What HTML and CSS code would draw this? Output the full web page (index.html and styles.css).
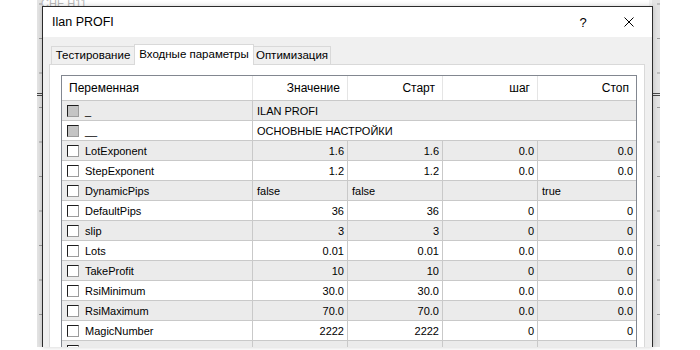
FILE: index.html
```html
<!DOCTYPE html>
<html>
	<head>
		<meta http-equiv="Content-Type" content="text/html; charset=utf-8" />
		<title>Ilan PROFI</title>
		<link rel="stylesheet" href="styles.css">
	</head>
	<body>
		<!-- окно терминала за диалогом -->
		<div class="backdrop">
			<div class="scale scale-left"></div>
			<div class="chart">
				<span class="chart-caption">СНЕ Н11</span>
			</div>
			<div class="scale scale-right"></div>
		</div>

		<div class="dialog">
			<div class="titlebar">
				<span class="title">Ilan PROFI</span>
				<span class="caption-btn">?</span>
				<span class="caption-btn">
					<svg width="10" height="10" viewBox="0 0 10 10"><path d="M0.5 0.5L9.5 9.5M9.5 0.5L0.5 9.5" stroke="#000" stroke-width="1" fill="none"/></svg>
				</span>
			</div>
			<div class="dialog-body">
				<div class="tabs">
					<div class="tab tab-test">Тестирование</div>
					<div class="tab tab-active">Входные параметры</div>
					<div class="tab tab-opt">Оптимизация</div>
				</div>
				<div class="page">
					<div class="grid">
						<div class="row head">
							<div class="cell">Переменная</div>
							<div class="cell num">Значение</div>
							<div class="cell num">Старт</div>
							<div class="cell num">шаг</div>
							<div class="cell num">Стоп</div>
						</div>
						<div class="row">
							<div class="cell name"><i class="chk chk-off"></i>_</div>
							<div class="cell span">ILAN PROFI</div>
						</div>
						<div class="row">
							<div class="cell name"><i class="chk chk-off"></i>__</div>
							<div class="cell span">ОСНОВНЫЕ НАСТРОЙКИ</div>
						</div>
						<div class="row">
							<div class="cell name"><i class="chk"></i>LotExponent</div>
							<div class="cell num">1.6</div>
							<div class="cell num">1.6</div>
							<div class="cell num">0.0</div>
							<div class="cell num">0.0</div>
						</div>
						<div class="row">
							<div class="cell name"><i class="chk"></i>StepExponent</div>
							<div class="cell num">1.2</div>
							<div class="cell num">1.2</div>
							<div class="cell num">0.0</div>
							<div class="cell num">0.0</div>
						</div>
						<div class="row">
							<div class="cell name"><i class="chk"></i>DynamicPips</div>
							<div class="cell">false</div>
							<div class="cell">false</div>
							<div class="cell"></div>
							<div class="cell">true</div>
						</div>
						<div class="row">
							<div class="cell name"><i class="chk"></i>DefaultPips</div>
							<div class="cell num">36</div>
							<div class="cell num">36</div>
							<div class="cell num">0</div>
							<div class="cell num">0</div>
						</div>
						<div class="row">
							<div class="cell name"><i class="chk"></i>slip</div>
							<div class="cell num">3</div>
							<div class="cell num">3</div>
							<div class="cell num">0</div>
							<div class="cell num">0</div>
						</div>
						<div class="row">
							<div class="cell name"><i class="chk"></i>Lots</div>
							<div class="cell num">0.01</div>
							<div class="cell num">0.01</div>
							<div class="cell num">0.0</div>
							<div class="cell num">0.0</div>
						</div>
						<div class="row">
							<div class="cell name"><i class="chk"></i>TakeProfit</div>
							<div class="cell num">10</div>
							<div class="cell num">10</div>
							<div class="cell num">0</div>
							<div class="cell num">0</div>
						</div>
						<div class="row">
							<div class="cell name"><i class="chk"></i>RsiMinimum</div>
							<div class="cell num">30.0</div>
							<div class="cell num">30.0</div>
							<div class="cell num">0.0</div>
							<div class="cell num">0.0</div>
						</div>
						<div class="row">
							<div class="cell name"><i class="chk"></i>RsiMaximum</div>
							<div class="cell num">70.0</div>
							<div class="cell num">70.0</div>
							<div class="cell num">0.0</div>
							<div class="cell num">0.0</div>
						</div>
						<div class="row">
							<div class="cell name"><i class="chk"></i>MagicNumber</div>
							<div class="cell num">2222</div>
							<div class="cell num">2222</div>
							<div class="cell num">0</div>
							<div class="cell num">0</div>
						</div>
						<div class="row">
							<div class="cell name"><i class="chk"></i>MaxTrades</div>
							<div class="cell num">10</div>
							<div class="cell num">10</div>
							<div class="cell num">0</div>
							<div class="cell num">0</div>
						</div>
					</div>
				</div>
			</div>
		</div>
	</body>
</html>
```

FILE: styles.css
```css
body{
	margin: 0;
	width: 700px;
	height: 350px;
	overflow: hidden;
	position: relative;
	background-color: #FFFFFF;
	font-family: "Liberation Sans", "DejaVu Sans", sans-serif;
	color: #000;
}
.backdrop{
	position: absolute;
	left: 37px;
	top: 0;
	width: 623px;
	height: 347px;
	display: flex;
}
.scale{
	background-color: #e4e4e4;
	background-image:
		linear-gradient(to bottom, transparent 93px, #4a4a4a 93px, #4a4a4a 94px, transparent 94px, transparent 95px, #4a4a4a 95px, #4a4a4a 96px, transparent 96px),
		linear-gradient(to bottom, #9a9a9a 0, #9a9a9a 1px, transparent 1px);
	background-size: 100% 100%, 3px 34.5px;
	background-position: 0 0, right 0 top 107px;
	background-repeat: no-repeat, repeat-y;
}
.scale-left{
	width: 5px;
}
.scale-right{
	width: 8px;
	border-left: 3px solid #f2f2f2;
}
.chart{
	flex: 1;
	background-color: #FFFFFF;
}
.chart-caption{
	display: block;
	margin: -3px 0 0 -1px;
	font-size: 11px;
	color: #b8b8b8;
}
.dialog{
	position: absolute;
	left: 42px;
	top: 6px;
	width: 611px;
	height: 341px;
	box-sizing: border-box;
	border: 1px solid #2b2b2b;
	border-bottom: 0;
	background-color: #f0f0f0;
	overflow: hidden;
	display: flex;
	flex-direction: column;
	box-shadow: 0 0 5px rgba(0,0,0,.2);
}
.titlebar{
	height: 30px;
	flex: none;
	background-color: #FFFFFF;
	display: flex;
	align-items: center;
	padding-left: 9px;
	font-size: 12.5px;
}
.title{
	flex: 1;
}
.caption-btn{
	width: 46px;
	height: 30px;
	display: flex;
	align-items: center;
	justify-content: center;
	font-size: 13px;
}
.dialog-body{
	flex: 1;
	display: flex;
	flex-direction: column;
	padding: 7px 7px 0 6px;
}
.tabs{
	height: 20px;
	display: flex;
	align-items: flex-end;
	padding-left: 2px;
	position: relative;
	z-index: 1;
}
.tab{
	height: 18px;
	box-sizing: border-box;
	border: 1px solid #d9d9d9;
	border-bottom: 0;
	background-color: #f0f0f0;
	font-size: 11.5px;
	line-height: 17px;
	text-align: center;
	white-space: nowrap;
}
.tab-test{
	width: 83px;
	border-right: 0;
}
.tab-active{
	width: 120px;
	height: 21px;
	margin-bottom: -1px;
	background-color: #FFFFFF;
	line-height: 18px;
}
.tab-opt{
	width: 77px;
	border-left: 0;
}
.page{
	flex: 1;
	background-color: #FFFFFF;
	border: 1px solid #d9d9d9;
	border-bottom: 0;
	padding: 10px 7px 0 11px;
}
.grid{
	border: 1px solid #828790;
	border-bottom: 0;
	font-size: 11px;
}
.row{
	display: grid;
	grid-template-columns: 191px 95px 95px 95px 1fr;
	height: 20px;
	box-sizing: border-box;
	border-bottom: 1px solid #c9c9c9;
}
.row:nth-child(even){
	background-color: #ebebeb;
}
.cell{
	display: flex;
	align-items: center;
	padding: 0 3px 0 4px;
	border-right: 1px solid #c9c9c9;
	white-space: nowrap;
	overflow: hidden;
}
.cell:last-child{
	border-right: 0;
}
.cell.num{
	justify-content: flex-end;
}
.cell.span{
	grid-column: 2 / -1;
}
.cell.name{
	padding-left: 5px;
	gap: 6px;
}
.row.head{
	height: 25px;
	background-color: #FFFFFF;
	font-size: 12px;
}
.row.head .cell{
	border-right-color: #e5e5e5;
	padding: 0 7px;
}
.row.head .cell:last-child{
	border-right: 0;
}
.chk{
	width: 12px;
	height: 12px;
	box-sizing: border-box;
	flex: none;
	border: 1px solid;
	border-color: #1e1e1e #9c9c9c #9c9c9c #1e1e1e;
	background-color: #FFFFFF;
}
.chk.chk-off{
	background-color: #c4c4c4;
}
```
